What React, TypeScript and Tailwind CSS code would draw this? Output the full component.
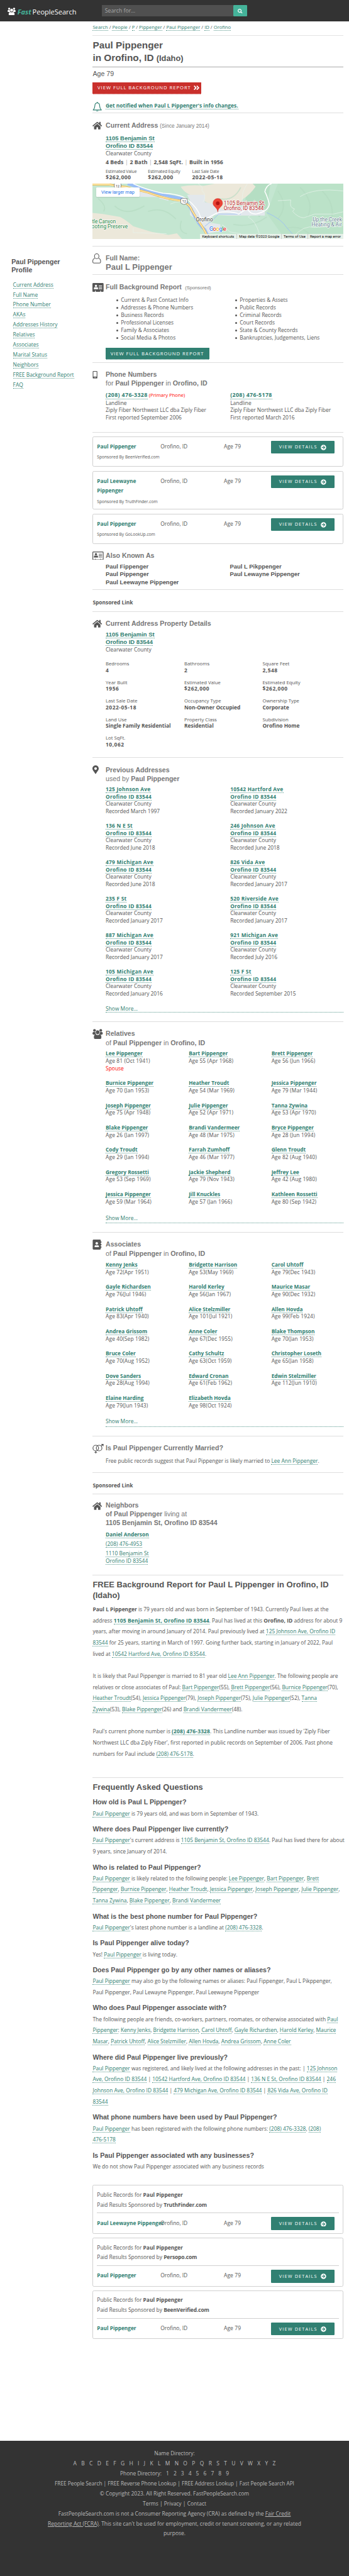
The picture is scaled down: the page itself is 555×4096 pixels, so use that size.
import React from 'react';
import { FaHome, FaMapMarkerAlt, FaMobileAlt, FaAddressBook, FaArrowCircleRight, FaSearch, FaAngleDoubleRight } from 'react-icons/fa';

type Kids = { children?: React.ReactNode; className?: string };

function Link({ children, className = '' }: Kids) {
  return <a className={`border-b border-dotted border-[#318072]/80 text-[#318072] ${className}`}>{children}</a>;
}

function Arial({ children, className = '' }: Kids) {
  return <div className={`whitespace-nowrap font-['Liberation_Sans',sans-serif] ${className}`}>{children}</div>;
}

function Section({ icon, children, className = '' }: Kids & { icon: React.ReactNode }) {
  return (
    <section className={`flex border-b border-[#dedede] ${className}`}>
      <div className="w-[35px] shrink-0 text-[#555]">{icon}</div>
      <div className="min-w-0 flex-1">{children}</div>
    </section>
  );
}

function PeopleIcon({ className = '' }: { className?: string }) {
  return (
    <svg viewBox="0 0 28 27" preserveAspectRatio="none" fill="currentColor" className={className}>
      <circle cx="5.6" cy="4" r="3.7" />
      <circle cx="22.4" cy="4" r="3.7" />
      <ellipse cx="14" cy="9" rx="4.9" ry="5.3" />
      <path d="M2 8.5Q5 7.5 8 9Q8 12.500 10 15.500L3 15.500Q0 15 0 12.500Q0 9.500 2 8.500ZM26 8.500Q23 7.500 20 9Q20 12.500 18 15.500L25 15.500Q28 15 28 12.500Q28 9.500 26 8.500Z" />
      <path d="M8.500 15Q14 18 19.500 15Q24 16 24 21L24 24Q24 27 21 27L7 27Q4 27 4 24L4 21Q4 16 8.500 15Z" />
    </svg>
  );
}

function CardIcon({ filled, className = '' }: { filled?: boolean; className?: string }) {
  const ink = filled ? '#fff' : '#555';
  return (
    <svg viewBox="0 0 30 24" preserveAspectRatio="none" className={className}>
      <rect x="1" y="1" width="28" height="22" rx="1.500" fill={filled ? '#555' : '#fff'} stroke="#555" strokeWidth="2" />
      <circle cx="9.500" cy="7.500" r="3" fill={ink} />
      <path d="M4 17V14Q4 11.500 7 11.200L9.500 12L12 11.200Q15 11.500 15 14V17Z" fill={ink} />
      <path d="M17 7.500H26M17 11.500H26M17 15.500H26" stroke={ink} strokeWidth="1.800" />
      <path d="M8 20.500V24M22 20.500V24" stroke={ink} strokeWidth="1.800" />
    </svg>
  );
}

function BellIcon() {
  return (
    <svg viewBox="0 0 26 27" className="h-[27px] w-[26px]" fill="none" stroke="#318072" strokeWidth="2">
      <path d="M13 2.500C7.500 3 6.500 7.500 6.500 11C6.500 16 4.500 19 2 22H24C21.500 19 19.500 16 19.500 11C19.500 7.500 18.500 3 13 2.500Z" strokeLinejoin="round" />
      <path d="M13 0V3" />
      <path d="M10 24Q10.500 26.500 13 26.500Q15.500 26.500 16 24Z" fill="#318072" stroke="none" />
    </svg>
  );
}

function PersonIcon() {
  return (
    <svg viewBox="0 0 23 27" className="mt-[19px] h-[27px] w-[23px]" fill="none" stroke="#555" strokeWidth="1.800">
      <ellipse cx="11.500" cy="7.500" rx="6" ry="6.600" />
      <path d="M6.500 13Q1 14.500 1 20V23Q1 26 4 26H19Q22 26 22 23V20Q22 14.500 16.500 13" />
    </svg>
  );
}

function CoupleIcon() {
  return (
    <svg viewBox="0 0 30 26" className="mt-5 h-[26px] w-[30px]" fill="none" stroke="#555" strokeWidth="2">
      <circle cx="9" cy="11" r="7.600" />
      <circle cx="18" cy="11" r="7.600" />
      <path d="M9 18.600V26M5.500 22.500H12.500M23.500 6L29 1M24 1H29V6" />
    </svg>
  );
}

function Shield({ x, y }: { x: number; y: number }) {
  return (
    <g transform={`translate(${x} ${y})`}>
      <path d="M-8 -8Q-5 -6 -4 -8.500H4Q5 -6 8 -8Q10 -3 9 2Q8.500 6 5 6.500Q2 6.500 0 8.500Q-2 6.500 -5 6.500Q-8.500 6 -9 2Q-10 -3 -8 -8Z" fill="#fff" stroke="#555" strokeWidth="1.200" />
      <text x="0" y="3.500" textAnchor="middle" fontSize="9" fill="#333">12</text>
    </g>
  );
}

function MapView() {
  return (
    <div className="relative h-[150px] overflow-hidden bg-[#c4e6d1] font-[Roboto,sans-serif]">
      <svg viewBox="0 0 676 150" className="block h-full w-full" fontFamily="Roboto, sans-serif">
        <path d="M500 0H676V150H520L470 80Z" fill="#bbe2c8" />
        <path d="M420 0L480 0L470 70L450 90L410 55Z" fill="#b5dec3" />
        <path d="M238 8Q270 2 300 6L330 0H432L440 8Q425 30 405 42Q390 75 350 76L290 40Q250 30 238 8Z" fill="#ece8da" />
        <path d="M0 79L28 82L75 90Q90 98 110 115L160 130L205 138L228 134L242 150H0Z" fill="#ece8da" />
        <path d="M85 10L140 22L205 36V46L180 40V36H150L85 34Z" fill="#e3e8ec" />
        <path d="M255 30H303V50L325 55L350 70L415 58L465 72V86H365L330 84L310 104L345 110V128L310 135L290 104L263 85V45Z" fill="#e3e8ec" />
        <path d="M15 40Q40 60 30 75M60 60Q90 90 140 60M150 75Q190 60 225 95M240 100Q230 130 255 135M380 110Q430 120 470 90M500 20Q530 60 500 95M560 10Q600 50 580 90M620 20Q660 60 640 110M400 10Q380 50 340 40M525 120Q560 110 590 140" fill="none" stroke="#b3d9c0" strokeWidth="3" opacity=".55" />
        <path d="M95 0Q120 8 150 20Q200 33 240 40Q262 55 272 80Q287 112 303 124L316 150" fill="none" stroke="#9bbff6" strokeWidth="8" />
        <path d="M303 115Q325 100 340 82L400 82M470 78Q510 95 525 120L540 136" fill="none" stroke="#9bbff6" strokeWidth="1.500" />
        <path d="M0 2H45Q60 6 90 9L150 24Q200 42 232 45Q262 52 268 72L285 100Q300 120 308 138L330 150" fill="none" stroke="#f3b23c" strokeWidth="5" />
        <path d="M0 2H45Q60 6 90 9L150 24Q200 42 232 45Q262 52 268 72L285 100Q300 120 308 138L330 150" fill="none" stroke="#fdeeb5" strokeWidth="2.500" />
        <path d="M110 0Q140 15 190 26Q235 28 255 42Q285 65 292 92L308 94L338 78Q370 72 395 82Q412 70 418 68Q425 82 440 82Q475 75 477 55Q470 30 465 22Q468 5 483 0" fill="none" stroke="#fff" strokeWidth="2.500" />
        <path d="M500 46L535 44Q530 65 545 68L540 75Q555 92 570 92L600 82H650L676 76M540 145Q570 110 600 118L676 112M560 35Q600 10 676 20M350 110Q360 118 370 130L400 135M285 0Q300 10 295 18Q310 32 298 50M418 0Q400 25 405 48M210 55Q225 48 240 48M430 82L420 90Q440 100 450 135M110 120V132L200 135" fill="none" stroke="#e9f4ec" strokeWidth="1.200" />
        <Shield x={68} y={6} />
        <Shield x={247} y={48} />
        <path d="M338 77C337 63 325 63 325 52.500A13 12.500 0 0 1 351 52.500C351 63 339 63 338 77Z" fill="#ea4335" stroke="#c5221f" strokeWidth=".6" />
        <circle cx="338" cy="53" r="5" fill="#b31412" />
        <g stroke="#fff" strokeWidth="2.500" paintOrder="stroke" strokeLinejoin="round" fontSize="14">
          <text x="354" y="57" fill="#b31412" textLength="111">1105 Benjamin St,</text>
          <text x="354" y="71" fill="#b31412" textLength="108">Orofino, ID 83544</text>
          <text x="279" y="102" fill="#333" textLength="46">Orofino</text>
          <text x="-1" y="106" fill="#188038" textLength="64">tle Canyon</text>
          <text x="-2" y="120" fill="#188038" textLength="97">ooting Preserve</text>
          <text x="594" y="101" fill="#5f7d8e" textLength="79">Up the Creek</text>
          <text x="591" y="115" fill="#5f7d8e" textLength="82">Heating &amp; Air</text>
        </g>
        <text x="315" y="128" fontSize="16" fontWeight="500" stroke="#fff" strokeWidth="2" paintOrder="stroke" textLength="46">
          <tspan fill="#4285f4">G</tspan><tspan fill="#ea4335">o</tspan><tspan fill="#fbbc04">o</tspan><tspan fill="#4285f4">g</tspan><tspan fill="#34a853">l</tspan><tspan fill="#ea4335">e</tspan>
        </text>
      </svg>
      <div className="absolute left-[10px] top-[10px] flex h-[26px] w-[116px] items-center justify-center rounded-[2px] bg-white text-[12.500px] text-[#1a73e8] shadow">View larger map</div>
      <div className="absolute bottom-0 right-0 flex h-[14px] w-[386px] items-center bg-[#eef3ef]/85 text-[10px] leading-[14px] text-black">
        <span className="w-[99px] whitespace-nowrap border-r border-[#ccc] pl-[5px]">Keyboard shortcuts</span>
        <span className="w-[120px] whitespace-nowrap border-r border-[#ccc] pl-[6px]">Map data ©2023 Google</span>
        <span className="w-[72px] whitespace-nowrap border-r border-[#ccc] pl-[6px]">Terms of Use</span>
        <span className="whitespace-nowrap pl-[5px]">Report a map error</span>
      </div>
    </div>
  );
}

function DetailsButton({ className }: { className: string }) {
  return (
    <a className={`flex w-[170px] shrink-0 items-center rounded-[2px] bg-[#318072] pl-[21px] pt-[2px] text-[12.300px] tracking-[2px] text-white ${className}`}>
      <span className="w-[112px] whitespace-nowrap">VIEW DETAILS</span>
      <FaArrowCircleRight className="h-[15px] w-[15px]" />
    </a>
  );
}

function SponsorCard({ name, site, className }: { name: React.ReactNode; site: string; className: string }) {
  return (
    <div className={`flex rounded-[4px] border border-[#d0d0d0] pl-[10px] ${className}`}>
      <div className="w-[171px] pt-3">
        <div className="whitespace-nowrap text-[14.100px] font-bold leading-[26px] text-[#318072]">{name}</div>
        <div className="whitespace-nowrap pt-[7px] text-[11.300px]">Sponsored By {site}</div>
      </div>
      <div className="w-[171px] pt-3 leading-[26px]">Orofino, ID</div>
      <div className="w-32 pt-3 leading-[26px] tracking-[.2px]">Age 79</div>
      <DetailsButton className="mt-[10px] h-[34px]" />
    </div>
  );
}

function PublicCard({ name, site }: { name: string; site: string }) {
  return (
    <div className="h-[131.500px] rounded-[4px] border border-[#d0d0d0] px-[10px] pt-[11px]">
      <div className="leading-[27px]">Public Records for <b>Paul Pippenger</b></div>
      <div className="leading-[27px]">Paid Results Sponsored by <b className="tracking-[-.2px]">{site}</b></div>
      <div className="mt-2 flex border-t border-[#d0d0d0] pt-[10px]">
        <div className="w-[171px] whitespace-nowrap pt-[6px] text-[14.100px] font-bold text-[#318072]">{name}</div>
        <div className="w-[171px] pt-[6px]">Orofino, ID</div>
        <div className="w-32 pt-[6px] tracking-[.2px]">Age 79</div>
        <DetailsButton className="h-[35px]" />
      </div>
    </div>
  );
}

const PROPERTY: [string, string][] = [
  ['Bedrooms', '4'], ['Bathrooms', '2'], ['Square Feet', '2,548'],
  ['Year Built', '1956'], ['Estimated Value', '$262,000'], ['Estimated Equity', '$262,000'],
  ['Last Sale Date', '2022-05-18'], ['Occupancy Type', 'Non-Owner Occupied'], ['Ownership Type', 'Corporate'],
  ['Land Use', 'Single Family Residential'], ['Property Class', 'Residential'], ['Subdivision', 'Orofino Home'],
  ['Lot SqFt.', '10,062'],
];

const ADDRESSES: [string, string][] = [
  ['125 Johnson Ave', 'March 1997'], ['10542 Hartford Ave', 'January 2022'],
  ['136 N E St', 'June 2018'], ['246 Johnson Ave', 'June 2018'],
  ['479 Michigan Ave', 'June 2018'], ['826 Vida Ave', 'January 2017'],
  ['235 F St', 'January 2017'], ['520 Riverside Ave', 'January 2017'],
  ['887 Michigan Ave', 'January 2017'], ['921 Michigan Ave', 'July 2016'],
  ['105 Michigan Ave', 'January 2016'], ['125 F St', 'September 2015'],
];

const RELATIVES: [string, string][] = [
  ['Lee Pippenger', 'Age 81 (Oct 1941)'], ['Bart Pippenger', 'Age 55 (Apr 1968)'], ['Brett Pippenger', 'Age 56 (Jun 1966)'],
  ['Burnice Pippenger', 'Age 70 (Jan 1953)'], ['Heather Troudt', 'Age 54 (Mar 1969)'], ['Jessica Pippenger', 'Age 79 (Mar 1944)'],
  ['Joseph Pippenger', 'Age 75 (Apr 1948)'], ['Julie Pippenger', 'Age 52 (Apr 1971)'], ['Tanna Zywina', 'Age 53 (Apr 1970)'],
  ['Blake Pippenger', 'Age 26 (Jan 1997)'], ['Brandi Vandermeer', 'Age 48 (Mar 1975)'], ['Bryce Pippenger', 'Age 28 (Jun 1994)'],
  ['Cody Troudt', 'Age 29 (Jan 1994)'], ['Farrah Zumhoff', 'Age 46 (Mar 1977)'], ['Glenn Troudt', 'Age 82 (Aug 1940)'],
  ['Gregory Rossetti', 'Age 53 (Sep 1969)'], ['Jackie Shepherd', 'Age 79 (Nov 1943)'], ['Jeffrey Lee', 'Age 42 (Aug 1980)'],
  ['Jessica Pippenger', 'Age 59 (Mar 1964)'], ['Jill Knuckles', 'Age 57 (Jan 1966)'], ['Kathleen Rossetti', 'Age 80 (Sep 1942)'],
];

const ASSOCIATES: [string, string][] = [
  ['Kenny Jenks', 'Age 72(Apr 1951)'], ['Bridgette Harrison', 'Age 53(May 1969)'], ['Carol Uhtoff', 'Age 79(Dec 1943)'],
  ['Gayle Richardsen', 'Age 76(Jul 1946)'], ['Harold Kerley', 'Age 56(Jan 1967)'], ['Maurice Masar', 'Age 90(Dec 1932)'],
  ['Patrick Uhtoff', 'Age 83(Apr 1940)'], ['Alice Stelzmiller', 'Age 101(Jul 1921)'], ['Allen Hovda', 'Age 99(Feb 1924)'],
  ['Andrea Grissom', 'Age 40(Sep 1982)'], ['Anne Coler', 'Age 67(Dec 1955)'], ['Blake Thompson', 'Age 70(Jan 1953)'],
  ['Bruce Coler', 'Age 70(Aug 1952)'], ['Cathy Schultz', 'Age 63(Oct 1959)'], ['Christopher Loseth', 'Age 65(Jan 1958)'],
  ['Dove Sanders', 'Age 28(Aug 1994)'], ['Edward Cronan', 'Age 61(Feb 1962)'], ['Edwin Stelzmiller', 'Age 112(Jun 1910)'],
  ['Elaine Harding', 'Age 79(Jun 1943)'], ['Elizabeth Hovda', 'Age 98(Oct 1924)'],
];

function PeopleGrid({ people, className }: { people: [string, string][]; className: string }) {
  return (
    <div className={`grid grid-cols-[224px_223px_194px] ${className}`}>
      {people.map(([name, age], i) => (
        <div key={i} className="h-[60px] whitespace-nowrap">
          <div><Link className="text-[14.100px] font-bold">{name}</Link></div>
          <div className="tracking-[.2px]">{age}</div>
          {age === 'Age 81 (Oct 1941)' && <div className="text-[#f00]">Spouse</div>}
        </div>
      ))}
    </div>
  );
}

/* Prose markup: [[text]] is a link, **text** is bold and [*text*] a bold link. */
function Rich({ text }: { text: string }) {
  return (
    <>
      {text.split(/(\[\[.*?\]\]|\[\*.*?\*\]|\*\*.*?\*\*)/).map((part, i) => {
        if (part.startsWith('[[')) return <Link key={i}>{part.slice(2, -2)}</Link>;
        if (part.startsWith('[*')) return <Link key={i} className="font-bold tracking-[.25px]">{part.slice(2, -2)}</Link>;
        if (part.startsWith('**')) return <b key={i}>{part.slice(2, -2)}</b>;
        return <React.Fragment key={i}>{part}</React.Fragment>;
      })}
    </>
  );
}

function Prose({ lines, className = '' }: { lines: string[]; className?: string }) {
  return (
    <div className={`text-[14.320px] ${className}`}>
      {lines.map((line, i) => <div key={i} className="h-[30px] whitespace-nowrap leading-[30px]"><Rich text={line} /></div>)}
    </div>
  );
}

const REPORT = [
  '**Paul L Pippenger** is 79 years old and was born in September of 1943. Currently Paul lives at the',
  'address [*1105 Benjamin St, Orofino ID 83544*]. Paul has lived at this **Orofino, ID** address for about 9',
  'years, after moving in around January of 2014. Paul previously lived at [[125 Johnson Ave, Orofino ID]]',
  '[[83544]] for 25 years, starting in March of 1997. Going further back, starting in January of 2022, Paul',
  'lived at [[10542 Hartford Ave, Orofino ID 83544]].',
  '',
  'It is likely that Paul Pippenger is married to 81 year old [[Lee Ann Pippenger]]. The following people are',
  'relatives or close associates of Paul: [[Bart Pippenger]](55), [[Brett Pippenger]](56), [[Burnice Pippenger]](70),',
  '[[Heather Troudt]](54), [[Jessica Pippenger]](79), [[Joseph Pippenger]](75), [[Julie Pippenger]](52), [[Tanna]]',
  '[[Zywina]](53), [[Blake Pippenger]](26) and [[Brandi Vandermeer]](48).',
  '',
  "Paul's current phone number is [*(208) 476-3328*]. This Landline number was issued by 'Ziply Fiber",
  "Northwest LLC dba Ziply Fiber', first reported in public records on September of 2006. Past phone",
  'numbers for Paul include [[(208) 476-5178]].',
];

const FAQ: [string, string[]][] = [
  ['How old is Paul L Pippenger?', ['[[Paul Pippenger]] is 79 years old, and was born in September of 1943.']],
  ['Where does Paul Pippenger live currently?', [
    "[[Paul Pippenger]]'s current address is [[1105 Benjamin St, Orofino ID 83544]]. Paul has lived there for about",
    '9 years, since January of 2014.']],
  ['Who is related to Paul Pippenger?', [
    '[[Paul Pippenger]] is likely related to the following people: [[Lee Pippenger]], [[Bart Pippenger]], [[Brett]]',
    '[[Pippenger]], [[Burnice Pippenger]], [[Heather Troudt]], [[Jessica Pippenger]], [[Joseph Pippenger]], [[Julie Pippenger]],',
    '[[Tanna Zywina]], [[Blake Pippenger]], [[Brandi Vandermeer]]']],
  ['What is the best phone number for Paul Pippenger?', ["[[Paul Pippenger]]'s latest phone number is a landline at [[(208) 476-3328]]."]],
  ['Is Paul Pippenger alive today?', ['Yes! [[Paul Pippenger]] is living today.']],
  ['Does Paul Pippenger go by any other names or aliases?', [
    '[[Paul Pippenger]] may also go by the following names or aliases: Paul Fippenger, Paul L Pikppenger,',
    'Paul Pippenger, Paul Lewayne Pippenger, Paul Leewayne Pippenger']],
  ['Who does Paul Pippenger associate with?', [
    'The following people are friends, co-workers, partners, roomates, or otherwise associated with [[Paul]]',
    '[[Pippenger]]: [[Kenny Jenks]], [[Bridgette Harrison]], [[Carol Uhtoff]], [[Gayle Richardsen]], [[Harold Kerley]], [[Maurice]]',
    '[[Masar]], [[Patrick Uhtoff]], [[Alice Stelzmiller]], [[Allen Hovda]], [[Andrea Grissom]], [[Anne Coler]]']],
  ['Where did Paul Pippenger live previously?', [
    '[[Paul Pippenger]] was registered, and likely lived at the following addresses in the past: | [[125 Johnson]]',
    '[[Ave, Orofino ID 83544]] | [[10542 Hartford Ave, Orofino ID 83544]] | [[136 N E St, Orofino ID 83544]] | [[246]]',
    '[[Johnson Ave, Orofino ID 83544]] | [[479 Michigan Ave, Orofino ID 83544]] | [[826 Vida Ave, Orofino ID]]',
    '[[83544]]']],
  ['What phone numbers have been used by Paul Pippenger?', [
    '[[Paul Pippenger]] has been registered with the following phone numbers: [[(208) 476-3328]], [[(208)]]',
    '[[476-5178]]']],
  ['Is Paul Pippenger associated wth any businesses?', ['We do not show Paul Pippenger associated with any business records']],
];

const SIDEBAR = ['Current Address', 'Full Name', 'Phone Number', 'AKAs', 'Addresses History', 'Relatives', 'Associates', 'Marital Status', 'Neighbors', 'FREE Background Report', 'FAQ'];

const H = 'text-[18px] font-bold text-[#777]';

function ShowMore({ className }: { className: string }) {
  return <a className={`block border-b border-dotted border-[#318072]/80 text-[#318072] ${className}`}>Show More...</a>;
}

function Bullets({ items }: { items: string[] }) {
  return (
    <ul className="w-[336px] list-none pl-[29px] leading-[20.400px]">
      {items.map((t) => (
        <li key={t} className="flex items-center gap-[7px] whitespace-nowrap">
          <span className="h-[5px] w-[5px] rounded-full bg-[#555]" />{t}
        </li>
      ))}
    </ul>
  );
}

export default function App() {
  return (
    <div className="w-full bg-white font-['Open_Sans',sans-serif] text-[14.300px] leading-[20px] text-[#555] [zoom:0.58969]">
      <header className="flex h-[57px] items-center bg-[#333]">
        <PeopleIcon className="ml-5 mt-[3px] h-[21px] w-[22px] text-white" />
        <div className="ml-[5px] mt-[6px] w-[227px] whitespace-nowrap text-[18.700px] text-white">
          <b className="mr-[3px] italic text-[#45b39a]">Fast</b>PeopleSearch
        </div>
        <div className="flex h-[31px]">
          <div className="w-[355px] bg-[#505050] pl-[9px] text-[14.750px] leading-[33px] text-[#aaa]">Search for...</div>
          <div className="flex w-[38px] items-center justify-center rounded-[2px] bg-[#45b39a]"><FaSearch className="mt-[2px] h-[13px] w-[13px] text-white" /></div>
        </div>
      </header>

      <div className="flex h-[6524px]">
        <aside className="w-[250px] shrink-0 pl-[31px] pt-[638px]">
          <Arial className="text-[18px] font-bold leading-[23px]">Paul Pippenger<br />Profile</Arial>
          <nav className="mt-[13px] pl-1">
            {SIDEBAR.map((t) => <div key={t} className="h-[27px] whitespace-nowrap leading-[27px]"><Link>{t}</Link></div>)}
          </nav>
        </aside>

        <main className="w-[676px]">
          <div className="h-[39px] whitespace-nowrap border-b border-[#e3e3e3] pt-2 text-[13px]">
            <Link>Search</Link> / <Link>People</Link> / <Link>P</Link> / <Link>Pippenger</Link> / <Link>Paul Pippenger</Link> / <Link>ID</Link> / <Link>Orofino</Link>
          </div>
          <div className="h-[86px] border-b border-[#aaa] pt-[8.600px]">
            <Arial className="text-[26px] font-bold leading-[33.700px]">Paul Pippenger<br />in Orofino, ID <span className="text-[21.800px]">(Idaho)</span></Arial>
          </div>
          <div className="h-[124px] border-b border-[#dedede] pt-[5px]">
            <Arial className="text-[18px] leading-[24px]">Age 79</Arial>
            <a className="mt-[11px] flex h-8 w-[293px] items-center whitespace-nowrap border-b border-dotted border-white bg-[#c9302c] pl-[13px] pt-[2px] text-[13px] tracking-[1.650px] text-white">
              <span className="w-[257px]">VIEW FULL BACKGROUND REPORT</span>
              <FaAngleDoubleRight className="mb-1 h-[19px] w-[19px]" />
            </a>
            <div className="mt-5 flex">
              <BellIcon />
              <div className="ml-[9px] mt-[1.500px] text-[14.200px] font-bold"><Link>Get notified when Paul L Pippenger's info changes.</Link></div>
            </div>
          </div>

          <section className="h-[358px] border-b border-[#dedede]">
            <div className="flex h-[189px]">
              <FaHome className="mt-[21px] h-[23px] w-[26px]" />
              <div className="ml-[9px] pt-[19.800px]">
                <Arial className={`leading-[24px] ${H}`}>Current Address <span className="text-[14px] font-normal">(Since January 2014)</span></Arial>
                <Arial className="mt-[9.700px] text-[16px] font-bold leading-[19.800px]"><Link>1105 Benjamin St</Link><br /><Link>Orofino ID 83544</Link></Arial>
                <div className="mt-[1.500px]">Clearwater County</div>
                <div className="mt-[5px] flex whitespace-nowrap text-[14.900px] font-bold">
                  4 Beds<span className="px-[4.500px] font-normal text-[#aaa]">|</span>2 Bath<span className="px-[4.500px] font-normal text-[#aaa]">|</span>2,548 SqFt.<span className="px-[4.500px] font-normal text-[#aaa]">|</span>Built in 1956
                </div>
                <div className="mt-[5.300px] flex whitespace-nowrap">
                  {[['Estimated Value', '$262,000', 'w-[114px]'], ['Estimated Equity', '$262,000', 'w-[119px]'], ['Last Sale Date', '2022-05-18', 'w-[120px]']].map(([k, v, w]) => (
                    <div key={k} className={w}>
                      <div className="text-[11.800px] leading-[16px] tracking-[-.3px]">{k}</div>
                      <div className="text-[14.700px] font-bold leading-[18px] tracking-[.7px]">{v}</div>
                    </div>
                  ))}
                </div>
              </div>
            </div>
            <MapView />
          </section>

          <Section className="h-[78px]" icon={<PersonIcon />}>
            <Arial className={`pt-[20.800px] leading-[22px] ${H}`}>Full Name:</Arial>
            <Arial className="text-[22px] font-bold leading-[28px] text-[#777]">Paul L Pippenger</Arial>
          </Section>

          <Section className="h-[237px]" icon={<CardIcon filled className="mt-[21px] h-[24px] w-[30px]" />}>
            <Arial className={`pt-[19.800px] leading-[24px] ${H}`}>Full Background Report <span className="ml-1 text-[12.800px] font-normal">(Sponsored)</span></Arial>
            <div className="mt-[10px] flex">
              <Bullets items={['Current & Past Contact Info', 'Addresses & Phone Numbers', 'Business Records', 'Professional Licenses', 'Family & Associates', 'Social Media & Photos']} />
              <Bullets items={['Properties & Assets', 'Public Records', 'Criminal Records', 'Court Records', 'State & County Records', 'Bankruptcies, Judgements, Liens']} />
            </div>
            <a className="mt-[17px] flex h-8 w-[280px] items-center whitespace-nowrap border-b border-dotted border-white bg-[#318072] pl-[13px] pt-[3px] text-[13px] tracking-[1.650px] text-white">VIEW FULL BACKGROUND REPORT</a>
          </Section>

          <Section className="h-[187px]" icon={<FaMobileAlt className="ml-[-1px] mt-[22px] h-[20px] w-[14px]" />}>
            <Arial className={`pt-[20.300px] leading-[23px] ${H}`}>Phone Numbers<br /><span className="font-normal">for</span> Paul Pippenger <span className="font-normal">in</span> Orofino, ID</Arial>
            <div className="mt-[9px] flex whitespace-nowrap leading-[20.200px]">
              <div className="w-[336px]">
                <Link className="text-[15px] font-bold tracking-[.6px]">(208) 476-3328</Link> <span className="text-[13px] text-[#f00]">(Primary Phone)</span><br />
                Landline<br />Ziply Fiber Northwest LLC dba Ziply Fiber<br />First reported September 2006
              </div>
              <div>
                <Link className="text-[15px] font-bold tracking-[.6px]">(208) 476-5178</Link><br />
                Landline<br />Ziply Fiber Northwest LLC dba Ziply Fiber<br />First reported March 2016
              </div>
            </div>
          </Section>

          <div className="flex h-[301px] flex-col gap-[11px] pt-[10.500px]">
            <SponsorCard name="Paul Pippenger" site="BeenVerified.com" className="h-[82.500px]" />
            <SponsorCard name={<>Paul Leewayne<br />Pippenger</>} site="TruthFinder.com" className="h-[104px]" />
            <SponsorCard name="Paul Pippenger" site="GoLookUp.com" className="h-[82px]" />
          </div>

          <Section className="h-[124px]" icon={<CardIcon className="mt-5 h-[23px] w-[30px]" />}>
            <Arial className={`pt-[18.800px] leading-[24px] ${H}`}>Also Known As</Arial>
            <div className="mt-2 flex text-[16px] font-bold leading-[21px]">
              <Arial className="w-[335px]">Paul Fippenger<br />Paul Pippenger<br />Paul Leewayne Pippenger</Arial>
              <Arial>Paul L Pikppenger<br />Paul Lewayne Pippenger</Arial>
            </div>
          </Section>

          <div className="h-[59px] border-b border-[#dedede] pt-[23.500px] text-[14.200px] font-bold">Sponsored Link</div>

          <Section className="h-[393px]" icon={<FaHome className="mt-[20px] h-[23px] w-[26px]" />}>
            <Arial className={`pt-[19.300px] leading-[24px] ${H}`}>Current Address Property Details</Arial>
            <Arial className="mt-2 text-[16px] font-bold leading-[20.600px]"><Link>1105 Benjamin St</Link><br /><Link>Orofino ID 83544</Link></Arial>
            <div>Clearwater County</div>
            <div className="mt-[19px] grid grid-cols-[212px_211px_218px] whitespace-nowrap leading-[17.300px]">
              {PROPERTY.map(([k, v]) => (
                <div key={k} className="h-[50px]">
                  <div className="text-[13.100px]">{k}</div>
                  <div className={`text-[14.200px] font-bold ${/^[$\d]/.test(v) ? 'tracking-[.9px]' : ''}`}>{v}</div>
                </div>
              ))}
            </div>
          </Section>

          <Section className="h-[713px]" icon={<FaMapMarkerAlt className="ml-[-1px] mt-[21px] h-[23px] w-[17px]" />}>
            <Arial className={`pt-[20.300px] leading-[24px] ${H}`}>Previous Addresses<br /><span className="font-normal">used by</span> Paul Pippenger</Arial>
            <div className="mt-[7.400px] grid grid-cols-[336px_305px] whitespace-nowrap leading-[19.600px]">
              {ADDRESSES.map(([street, date]) => (
                <div key={street} className="h-[98.300px]">
                  <div className="text-[14.200px] font-bold tracking-[.4px]"><Link>{street}</Link></div>
                  <div className="text-[14.200px] font-bold tracking-[.4px]"><Link>Orofino ID 83544</Link></div>
                  <div>Clearwater County</div>
                  <div>Recorded {date}</div>
                </div>
              ))}
            </div>
            <ShowMore className="mt-px" />
          </Section>

          <Section className="h-[568px]" icon={<PeopleIcon className="mt-[18px] h-[27px] w-[28px]" />}>
            <Arial className={`pt-[19.300px] leading-[24px] ${H}`}>Relatives<br /><span className="font-normal">of</span> Paul Pippenger <span className="font-normal">in</span> Orofino, ID</Arial>
            <PeopleGrid people={RELATIVES} className="mt-[7.200px] grid-rows-[80px]" />
            <ShowMore className="mt-1 pb-[3px]" />
          </Section>

          <Section className="h-[549px]" icon={<FaAddressBook className="mt-[19px] h-[27px] w-[25px]" />}>
            <Arial className={`pt-[19.500px] leading-[24px] ${H}`}>Associates<br /><span className="font-normal">of</span> Paul Pippenger <span className="font-normal">in</span> Orofino, ID</Arial>
            <PeopleGrid people={ASSOCIATES} className="mt-[8.500px]" />
            <ShowMore className="mt-[3.500px] pb-[3px]" />
          </Section>

          <Section className="h-[98px]" icon={<CoupleIcon />}>
            <Arial className={`pt-[19.800px] leading-[24px] ${H}`}>Is Paul Pippenger Currently Married?</Arial>
            <div className="mt-[12.700px] whitespace-nowrap">Free public records suggest that Paul Pippenger is likely married to <Link>Lee Ann Pippenger</Link>.</div>
          </Section>

          <div className="h-[58px] border-b border-[#dedede] pt-6 text-[14.200px] font-bold">Sponsored Link</div>

          <Section className="h-[220px]" icon={<FaHome className="mt-[21px] h-[23px] w-[26px]" />}>
            <Arial className={`pt-5 leading-[23.600px] ${H}`}>Neighbors<br />of Paul Pippenger <span className="font-normal">living at</span><br />1105 Benjamin St, Orofino ID 83544</Arial>
            <div className="mt-[8.700px]"><Link className="text-[14.100px] font-bold">Daniel Anderson</Link></div>
            <div className="mt-[5px]"><Link>(208) 476-4953</Link></div>
            <div className="mt-[5px]"><Link>1110 Benjamin St</Link><br /><Link>Orofino ID 83544</Link></div>
          </Section>

          <section className="h-[546px] border-b border-[#dedede] pt-[9px]">
            <Arial className="text-[22px] font-bold leading-[29px]">FREE Background Report for Paul L Pippenger in Orofino, ID<br />(Idaho)</Arial>
            <Prose className="mt-[8.400px]" lines={REPORT} />
          </section>

          <section className="h-[1097px] pt-[9.500px]">
            <Arial className="mb-[14.300px] text-[22px] font-bold leading-[29px]">Frequently Asked Questions</Arial>
            {FAQ.map(([q, lines]) => (
              <div key={q} className="pb-[14.950px]">
                <Arial className="h-[27.500px] text-[18px] font-bold leading-[24px]">{q}</Arial>
                <Prose lines={lines} />
              </div>
            ))}
          </section>

          <div className="flex flex-col gap-[10.600px]">
            <PublicCard name="Paul Leewayne Pippenger" site="TruthFinder.com" />
            <PublicCard name="Paul Pippenger" site="Persopo.com" />
            <PublicCard name="Paul Pippenger" site="BeenVerified.com" />
          </div>
        </main>
      </div>

      <footer className="flex h-[366px] flex-col items-center whitespace-nowrap bg-[#333] pt-[21px] text-center text-[14.350px] leading-[27px] text-[#bbb]">
        <div>Name Directory:</div>
        <div className="flex w-[546px] justify-between">{'ABCDEFGHIJKLMNOPQRSTUVWXYZ'.split('').map((c) => <span key={c}>{c}</span>)}</div>
        <div className="flex gap-[12px]">Phone Directory: {'123456789'.split('').map((c) => <span key={c}>{c}</span>)}</div>
        <div className="text-[14.030px]">FREE People Search | FREE Reverse Phone Lookup | FREE Address Lookup | Fast People Search API</div>
        <div>© Copyright 2023. All Right Reserved. FastPeopleSearch.com</div>
        <div>Terms | Privacy | Contact</div>
        <div>FastPeopleSearch.com is not a Consumer Reporting Agency (CRA) as defined by the <u>Fair Credit</u></div>
        <div><u>Reporting Act (FCRA)</u>. This site can't be used for employment, credit or tenant screening, or any related</div>
        <div>purpose.</div>
      </footer>
    </div>
  );
}
